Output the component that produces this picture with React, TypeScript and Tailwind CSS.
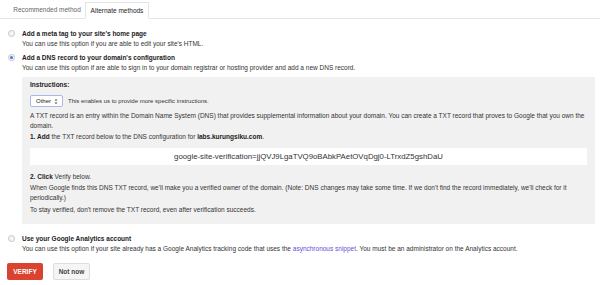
import React from "react";

function Radio({ checked }: { checked?: boolean }) {
  return (
    <div className="mt-[1px] flex h-[7px] w-[7px] shrink-0 items-center justify-center rounded-full border border-[#c6c6c6] bg-[#f4f4f4]">
      {checked && <div className="h-[3px] w-[3px] rounded-full bg-[#3b7bea]" />}
    </div>
  );
}

export default function App() {
  return (
    <div
      className="h-[285px] w-[600px] overflow-hidden bg-white text-[6.5px] leading-[10px] text-[#333]"
      style={{ fontFamily: '"Liberation Sans", Arial, sans-serif' }}
    >
      {/* Tabs */}
      <div className="flex h-[19px] items-end border-b border-[#e5e5e5] pl-[9px]">
        <div className="flex h-[16px] w-[76px] items-center justify-center text-[#666]">Recommended method</div>
        <div className="-mb-px flex h-[17px] w-[64px] items-center justify-center border border-b-white border-[#e5e5e5] bg-white text-[#222]">
          Alternate methods
        </div>
      </div>

      <div className="pl-[8px] pr-[5px] pt-[10px]">
        {/* Option 1 */}
        <div className="flex gap-[7px]">
          <Radio />
          <div>
            <div className="font-bold text-[#222]">Add a meta tag to your site's home page</div>
            <div>You can use this option if you are able to edit your site's HTML.</div>
          </div>
        </div>

        {/* Option 2 */}
        <div className="mt-[4px] flex gap-[7px]">
          <Radio checked />
          <div className="flex-1">
            <div className="font-bold text-[#222]">Add a DNS record to your domain's configuration</div>
            <div>
              You can use this option if are able to sign in to your domain registrar or hosting provider and add a new
              DNS record.
            </div>
            <div className="mt-[4px] bg-[#f1f1f1] px-[8px] pb-[9px] pt-[3px]">
              <div className="font-bold text-[#222]">Instructions:</div>
              <div className="mt-[5px] flex items-center gap-[5px]">
                <div className="flex h-[12px] w-[33px] items-center justify-between rounded-[2px] border border-[#a9b8e8] bg-white pl-[5px] pr-[4px] text-[6px] text-[#222]">
                  <span>Other</span>
                  <svg width="4" height="7" viewBox="0 0 4 7">
                    <path d="M0.5 2.6 L2 1 L3.5 2.6 Z M0.5 4.4 L2 6 L3.5 4.4 Z" fill="#444" />
                  </svg>
                </div>
                <span className="text-[6px]">This enables us to provide more specific instructions.</span>
              </div>
              <div className="mt-[4px]">
                A TXT record is an entry within the Domain Name System (DNS) that provides supplemental information about
                your domain. You can create a TXT record that proves to Google that you own the domain.
              </div>
              <div className="mt-[1px]">
                <b className="text-[#222]">1. Add</b> the TXT record below to the DNS configuration for{" "}
                <b className="text-[#222]">labs.kurungsiku.com</b>.
              </div>
              <div className="mt-[6px] flex h-[17px] items-center justify-center bg-white text-[7.8px] text-[#333]">
                google-site-verification=jjQVJ9LgaTVQ9oBAbkPAetOVqDgj0-LTrxdZ5gshDaU
              </div>
              <div className="mt-[7px]">
                <b className="text-[#222]">2. Click</b> Verify below.
              </div>
              <div className="mt-[1px]">
                When Google finds this DNS TXT record, we'll make you a verified owner of the domain. (Note: DNS changes may
                take some time. If we don't find the record immediately, we'll check for it periodically.)
              </div>
              <div className="mt-[2px]">To stay verified, don't remove the TXT record, even after verification succeeds.</div>
            </div>
          </div>
        </div>

        {/* Option 3 */}
        <div className="mt-[10px] flex gap-[7px]">
          <Radio />
          <div>
            <div className="font-bold text-[#222]">Use your Google Analytics account</div>
            <div>
              You can use this option if your site already has a Google Analytics tracking code that uses the{" "}
              <span className="text-[#6b4bd8]">asynchronous snippet</span>. You must be an administrator on the Analytics
              account.
            </div>
          </div>
        </div>

        {/* Buttons */}
        <div className="mt-[9px] flex gap-[10px]">
          <div className="-ml-[1px] flex h-[17px] w-[36px] items-center justify-center rounded-[2px] bg-[#d9432f] font-bold text-white">
            VERIFY
          </div>
          <div className="flex h-[17px] w-[37px] items-center justify-center rounded-[2px] border border-[#ddd] bg-[#f5f5f5] font-bold text-[#444]">
            Not now
          </div>
        </div>
      </div>
    </div>
  );
}
